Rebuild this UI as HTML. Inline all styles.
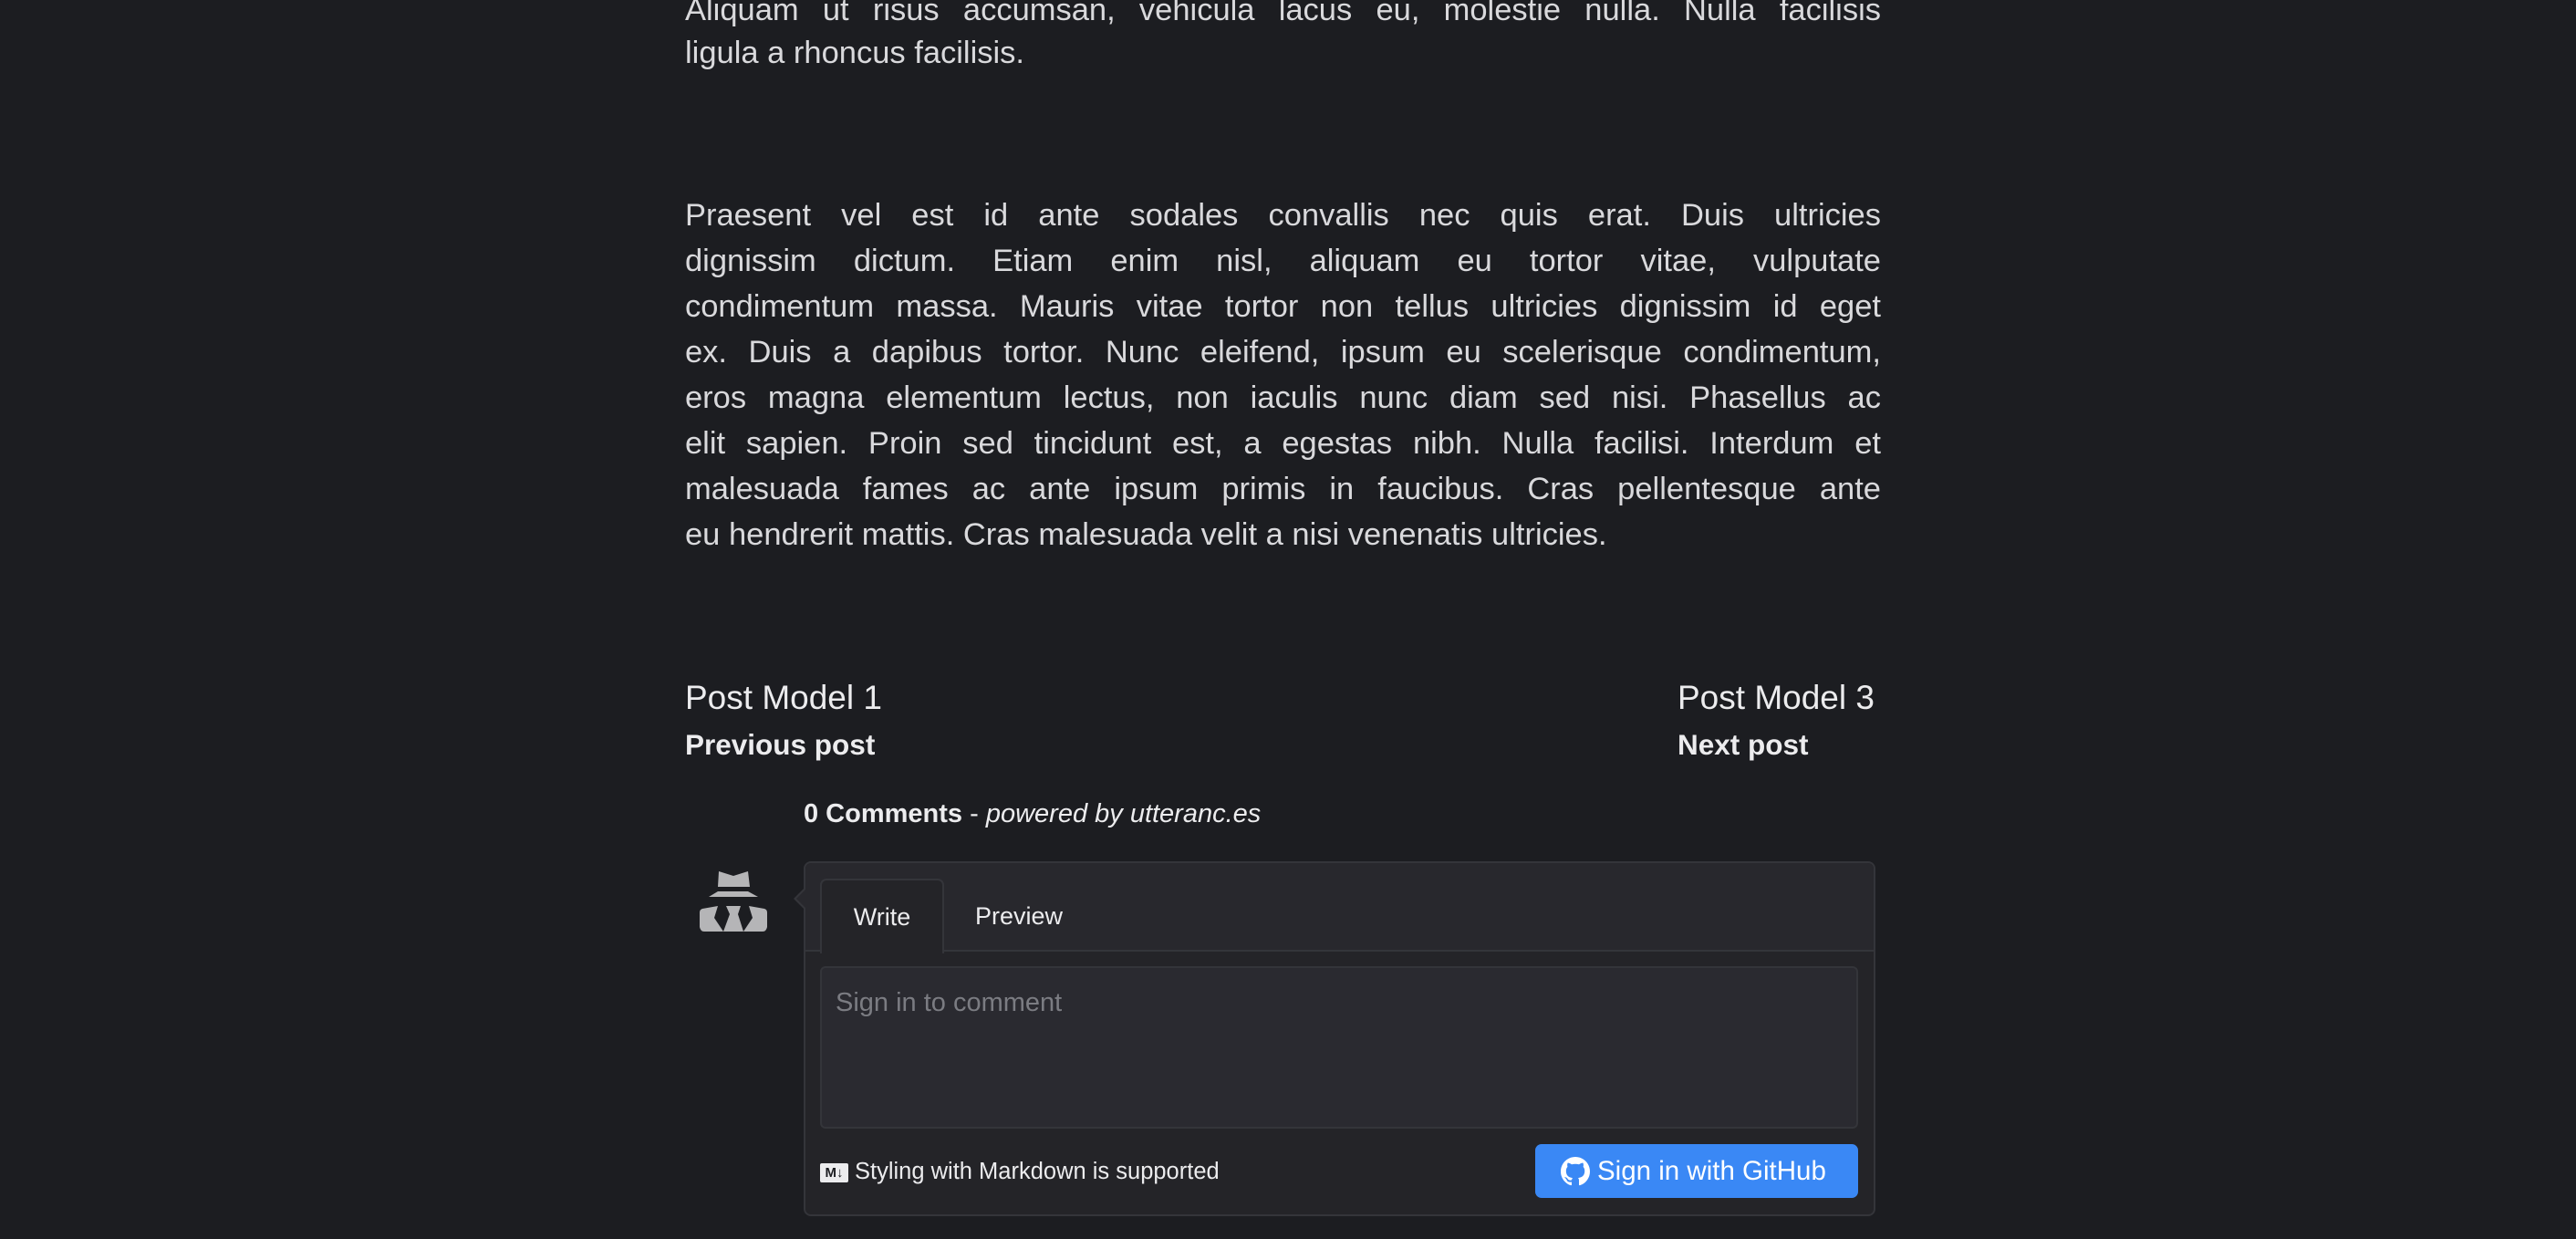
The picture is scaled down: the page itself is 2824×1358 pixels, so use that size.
<!DOCTYPE html>
<html><head><meta charset="utf-8"><style>
html,body{margin:0;padding:0;background:#1c1d21;width:2824px;height:1358px;overflow:hidden;font-family:"Liberation Sans",sans-serif;}
.l{position:absolute;left:751px;width:1311px;font-size:34.5px;color:#d9d9dc;text-align:justify;text-align-last:justify;line-height:50px;white-space:nowrap;}
.l.e{text-align-last:left;}
.abs{position:absolute;}
</style></head><body>
<div class="l" style="top:-14px">Aliquam ut risus accumsan, vehicula lacus eu, molestie nulla. Nulla facilisis</div>
<div class="l e" style="top:33px">ligula a rhoncus facilisis.</div>

<div class="l" style="top:211px">Praesent vel est id ante sodales convallis nec quis erat. Duis ultricies</div>
<div class="l" style="top:261px">dignissim dictum. Etiam enim nisl, aliquam eu tortor vitae, vulputate</div>
<div class="l" style="top:311px">condimentum massa. Mauris vitae tortor non tellus ultricies dignissim id eget</div>
<div class="l" style="top:361px">ex. Duis a dapibus tortor. Nunc eleifend, ipsum eu scelerisque condimentum,</div>
<div class="l" style="top:411px">eros magna elementum lectus, non iaculis nunc diam sed nisi. Phasellus ac</div>
<div class="l" style="top:461px">elit sapien. Proin sed tincidunt est, a egestas nibh. Nulla facilisi. Interdum et</div>
<div class="l" style="top:511px">malesuada fames ac ante ipsum primis in faucibus. Cras pellentesque ante</div>
<div class="l e" style="top:561px">eu hendrerit mattis. Cras malesuada velit a nisi venenatis ultricies.</div>

<div class="abs" style="left:751px;top:743px;font-size:37px;color:#ececee;line-height:44px">Post Model 1</div>
<div class="abs" style="left:751px;top:796px;font-size:31.5px;font-weight:bold;color:#ececee;line-height:40px">Previous post</div>
<div class="abs" style="left:1839px;top:743px;font-size:37px;color:#ececee;line-height:44px">Post Model 3</div>
<div class="abs" style="left:1839px;top:796px;font-size:31.5px;font-weight:bold;color:#ececee;line-height:40px">Next post</div>

<div class="abs" style="left:881px;top:874px;font-size:29px;color:#ececee;line-height:36px"><b>0 Comments</b> - <i>powered by utteranc.es</i></div>

<svg class="abs" style="left:750px;top:940px" width="120" height="100" viewBox="0 0 120 100">
<g fill="#b5b5b7">
<polygon points="38,15 54,20 70,15 72,32 37,32"/>
<polygon points="37,37 70,37 81,43 27,43"/>
<path d="M20,56 L37,53 L33,66 L43,81 L22,81 Q18,81 17,76 L17,60 Q17,57 20,56Z"/>
<polygon points="46,53 62,53 59,62 65,81 43,81 50,62"/>
<path d="M88,56 L71,53 L75,66 L65,81 L86,81 Q90,81 91,76 L91,60 Q91,57 88,56Z"/>
</g></svg>

<div class="abs" style="left:881px;top:944px;width:1171px;height:385px;border:2px solid #34353a;border-radius:8px;background:#242428;box-sizing:content-box;"></div>
<div class="abs" style="left:870px;top:973px;width:0;height:0;border-top:12px solid transparent;border-bottom:12px solid transparent;border-right:12px solid #34353a"></div>
<div class="abs" style="left:873px;top:975px;width:0;height:0;border-top:10px solid transparent;border-bottom:10px solid transparent;border-right:10px solid #28282d"></div>
<div class="abs" style="left:883px;top:946px;width:1171px;height:95px;background:#28282d;border-radius:7px 7px 0 0;border-bottom:2px solid #34353a"></div>
<div class="abs" style="left:899px;top:963px;width:132px;height:80px;background:#242428;border:2px solid #34353a;border-bottom:none;border-radius:7px 7px 0 0;font-size:27px;color:#ececee;text-align:center;line-height:80px">Write</div>
<div class="abs" style="left:1069px;top:985px;font-size:27px;color:#ececee;line-height:38px">Preview</div>
<div class="abs" style="left:899px;top:1059px;width:1134px;height:174px;background:#2a2a30;border:2px solid #34353a;border-radius:6px"></div>
<div class="abs" style="left:916px;top:1080px;font-size:29px;color:#7b7c82;line-height:38px">Sign in to comment</div>
<div class="abs" style="left:899px;top:1275px;width:31px;height:21px;background:#ececee;border-radius:2px;font-size:15px;font-weight:bold;color:#1c1d21;line-height:21px;text-align:center">M↓</div>
<div class="abs" style="left:937px;top:1267px;font-size:25.5px;color:#ececee;line-height:34px">Styling with Markdown is supported</div>
<div class="abs" style="left:1683px;top:1254px;width:354px;height:59px;background:#3a88f5;border-radius:7px;color:#fff;font-size:29.5px;line-height:59px">
<svg class="abs" style="left:28px;top:14px" width="32" height="32" viewBox="0 0 16 16"><path fill="#fff" d="M8 0C3.580 0 0 3.580 0 8c0 3.540 2.290 6.530 5.470 7.590.4.07.55-.17.55-.38 0-.19-.01-.82-.01-1.490-2.010.37-2.530-.49-2.690-.94-.09-.23-.48-.94-.82-1.130-.28-.15-.68-.52-.01-.53.63-.01 1.080.58 1.230.82.72 1.210 1.870.87 2.330.66.07-.52.28-.87.51-1.070-1.780-.2-3.640-.89-3.640-3.950 0-.87.31-1.590.82-2.150-.08-.2-.36-1.020.08-2.120 0 0 .67-.21 2.200.82.64-.18 1.320-.27 2-.27.68 0 1.360.09 2 .27 1.530-1.040 2.200-.82 2.200-.82.44 1.100.16 1.920.08 2.120.51.56.82 1.270.82 2.150 0 3.070-1.870 3.750-3.650 3.950.29.25.54.73.54 1.480 0 1.070-.01 1.930-.01 2.200 0 .21.15.46.55.38A8.013 8.013 0 0016 8c0-4.420-3.580-8-8-8z"/></svg>
<span class="abs" style="left:68px;top:0">Sign in with GitHub</span></div>
</body></html>
